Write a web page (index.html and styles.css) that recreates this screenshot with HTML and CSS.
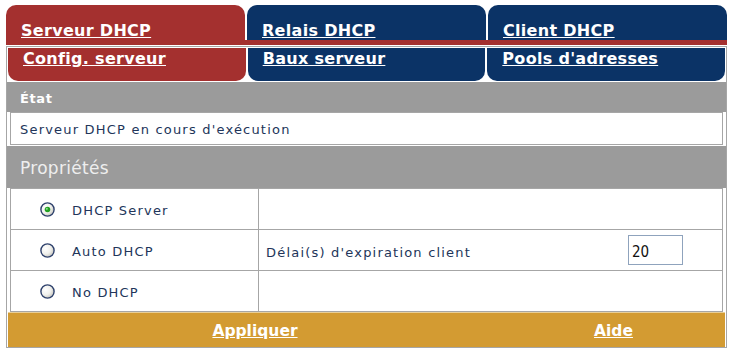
FILE: index.html
```html
<!DOCTYPE html>
<html lang="fr">
<head>
<meta charset="utf-8">
<title>Serveur DHCP</title>
<link rel="stylesheet" href="styles.css">
</head>
<body>
<div class="tabs-top">
  <div class="tab tab-red"><a href="#">Serveur DHCP</a></div>
  <div class="tab tab-navy"><a href="#">Relais DHCP</a></div>
  <div class="tab tab-navy"><a href="#">Client DHCP</a></div>
</div>
<div class="panel">
  <div class="tabs-sub">
    <div class="subtab tab-red"><a href="#">Config. serveur</a></div>
    <div class="subtab tab-navy"><a href="#">Baux serveur</a></div>
    <div class="subtab tab-navy"><a href="#">Pools d'adresses</a></div>
  </div>
  <div class="sec-head">État</div>
  <div class="status">Serveur DHCP en cours d'exécution</div>
  <div class="props-head">Propriétés</div>
  <div class="props">
    <div class="cell cell-left">
      <svg class="radio" width="15" height="15" viewBox="0 0 15 15"><defs><radialGradient id="rg1" cx="0.35" cy="0.35" r="0.75"><stop offset="0" stop-color="#ffffff"/><stop offset="0.55" stop-color="#f0f0ec"/><stop offset="1" stop-color="#bdbdb5"/></radialGradient></defs><circle cx="7.5" cy="7.5" r="6.6" fill="url(#rg1)" stroke="#2e416c" stroke-width="1.4"/><circle cx="7.5" cy="7.5" r="2.8" fill="#22a022"/><circle cx="6.8" cy="6.8" r="1.1" fill="#86db86"/></svg>
      <span>DHCP Server</span>
    </div>
    <div class="cell cell-right"></div>
    <div class="cell cell-left">
      <svg class="radio" width="15" height="15" viewBox="0 0 15 15"><defs><radialGradient id="rg2" cx="0.35" cy="0.35" r="0.75"><stop offset="0" stop-color="#ffffff"/><stop offset="0.55" stop-color="#f0f0ec"/><stop offset="1" stop-color="#bdbdb5"/></radialGradient></defs><circle cx="7.5" cy="7.5" r="6.6" fill="url(#rg2)" stroke="#2e416c" stroke-width="1.4"/></svg>
      <span>Auto DHCP</span>
    </div>
    <div class="cell cell-right cell-field">
      <span>Délai(s) d'expiration client</span>
      <input class="num" type="text" value="20">
    </div>
    <div class="cell cell-left cell-last">
      <svg class="radio" width="15" height="15" viewBox="0 0 15 15"><defs><radialGradient id="rg3" cx="0.35" cy="0.35" r="0.75"><stop offset="0" stop-color="#ffffff"/><stop offset="0.55" stop-color="#f0f0ec"/><stop offset="1" stop-color="#bdbdb5"/></radialGradient></defs><circle cx="7.5" cy="7.5" r="6.6" fill="url(#rg3)" stroke="#2e416c" stroke-width="1.4"/></svg>
      <span>No DHCP</span>
    </div>
    <div class="cell cell-right cell-last"></div>
  </div>
  <div class="footer">
    <a href="#">Appliquer</a>
    <a href="#">Aide</a>
  </div>
</div>
</body>
</html>
```
FILE: styles.css
```css
html, body {
  margin: 0;
  padding: 0;
  background: #ffffff;
}
body {
  font-family: "DejaVu Sans", Verdana, sans-serif;
  color: #22355a;
  width: 731px;
  height: 348px;
  overflow: hidden;
}
a {
  color: #ffffff;
  text-decoration: underline;
  font-weight: bold;
}
.tabs-top {
  margin: 5px 0 1px 6px;
  width: 721px;
  display: grid;
  grid-template-columns: 1fr 1fr 1fr;
  column-gap: 2px;
  border-bottom: 5px solid #a4302f;
}
.tab {
  height: 35px;
  box-sizing: border-box;
  padding: 16px 0 0 15px;
  border-radius: 10px 10px 0 0;
  line-height: 19px;
}
.tab a, .subtab a {
  font-size: 16px;
  letter-spacing: 0.3px;
}
.tab-red { background: #a4302f; }
.tab-navy { background: #0b3366; }
.panel {
  margin-left: 6px;
  width: 721px;
  box-sizing: border-box;
  border: 1px solid #a6a6a6;
  padding: 0 1px;
  background: #ffffff;
}
.tabs-sub {
  display: grid;
  grid-template-columns: 1fr 1fr 1fr;
  column-gap: 2px;
  margin-top: 1px;
  margin-bottom: 1px;
}
.subtab {
  height: 33px;
  box-sizing: border-box;
  padding: 1px 0 0 15px;
  border-radius: 0 0 10px 10px;
  line-height: 19px;
}
.sec-head {
  margin: 0 -1px;
  height: 30px;
  box-sizing: border-box;
  background: #9b9b9b;
  color: #ffffff;
  font-weight: bold;
  font-size: 13px;
  line-height: 15px;
  padding: 9px 0 0 13px;
  letter-spacing: 0.6px;
}
.status {
  margin: 0 2px 1px 2px;
  height: 33px;
  box-sizing: border-box;
  border: 1px solid #a6a6a6;
  font-size: 13px;
  line-height: 15px;
  padding: 9px 0 0 9px;
  letter-spacing: 1.2px;
}
.props-head {
  margin: 0 -1px;
  height: 42px;
  box-sizing: border-box;
  background: #9b9b9b;
  color: #eeeeee;
  font-size: 17px;
  line-height: 20px;
  padding: 12px 0 0 13px;
  letter-spacing: 0.3px;
}
.props {
  margin: 0 2px;
  border: 1px solid #a6a6a6;
  display: grid;
  grid-template-columns: 248px 1fr;
  grid-template-rows: 41px 41px 40px;
}
.cell {
  box-sizing: border-box;
  border-bottom: 1px solid #a6a6a6;
  display: flex;
  align-items: center;
  font-size: 13px;
  letter-spacing: 1.2px;
}
.cell-last {
  border-bottom: none;
}
.cell-left {
  border-right: 1px solid #a6a6a6;
  padding-left: 29px;
  gap: 17px;
}
.cell-left span {
  padding-top: 3px;
}
.radio {
  display: block;
  flex: none;
}
.cell-right {
  padding-left: 7px;
}
.cell-field {
  justify-content: space-between;
  padding-right: 39px;
}
.cell-field span {
  padding-top: 4px;
}
.num {
  width: 55px;
  height: 30px;
  box-sizing: border-box;
  border: 1px solid #8fa3bd;
  font-family: "DejaVu Sans Condensed", "Liberation Sans Narrow", sans-serif;
  font-size: 15px;
  color: #111111;
  padding: 4px 0 0 3px;
  letter-spacing: 0;
  margin: 0;
}
.footer {
  height: 35px;
  box-sizing: border-box;
  background: #d39b32;
  border-top: 1px solid #e9cf98;
  display: grid;
  grid-template-columns: 494px 1fr;
  align-items: center;
  justify-items: center;
}
.footer a {
  font-size: 15.5px;
  padding-top: 2px;
}
```
